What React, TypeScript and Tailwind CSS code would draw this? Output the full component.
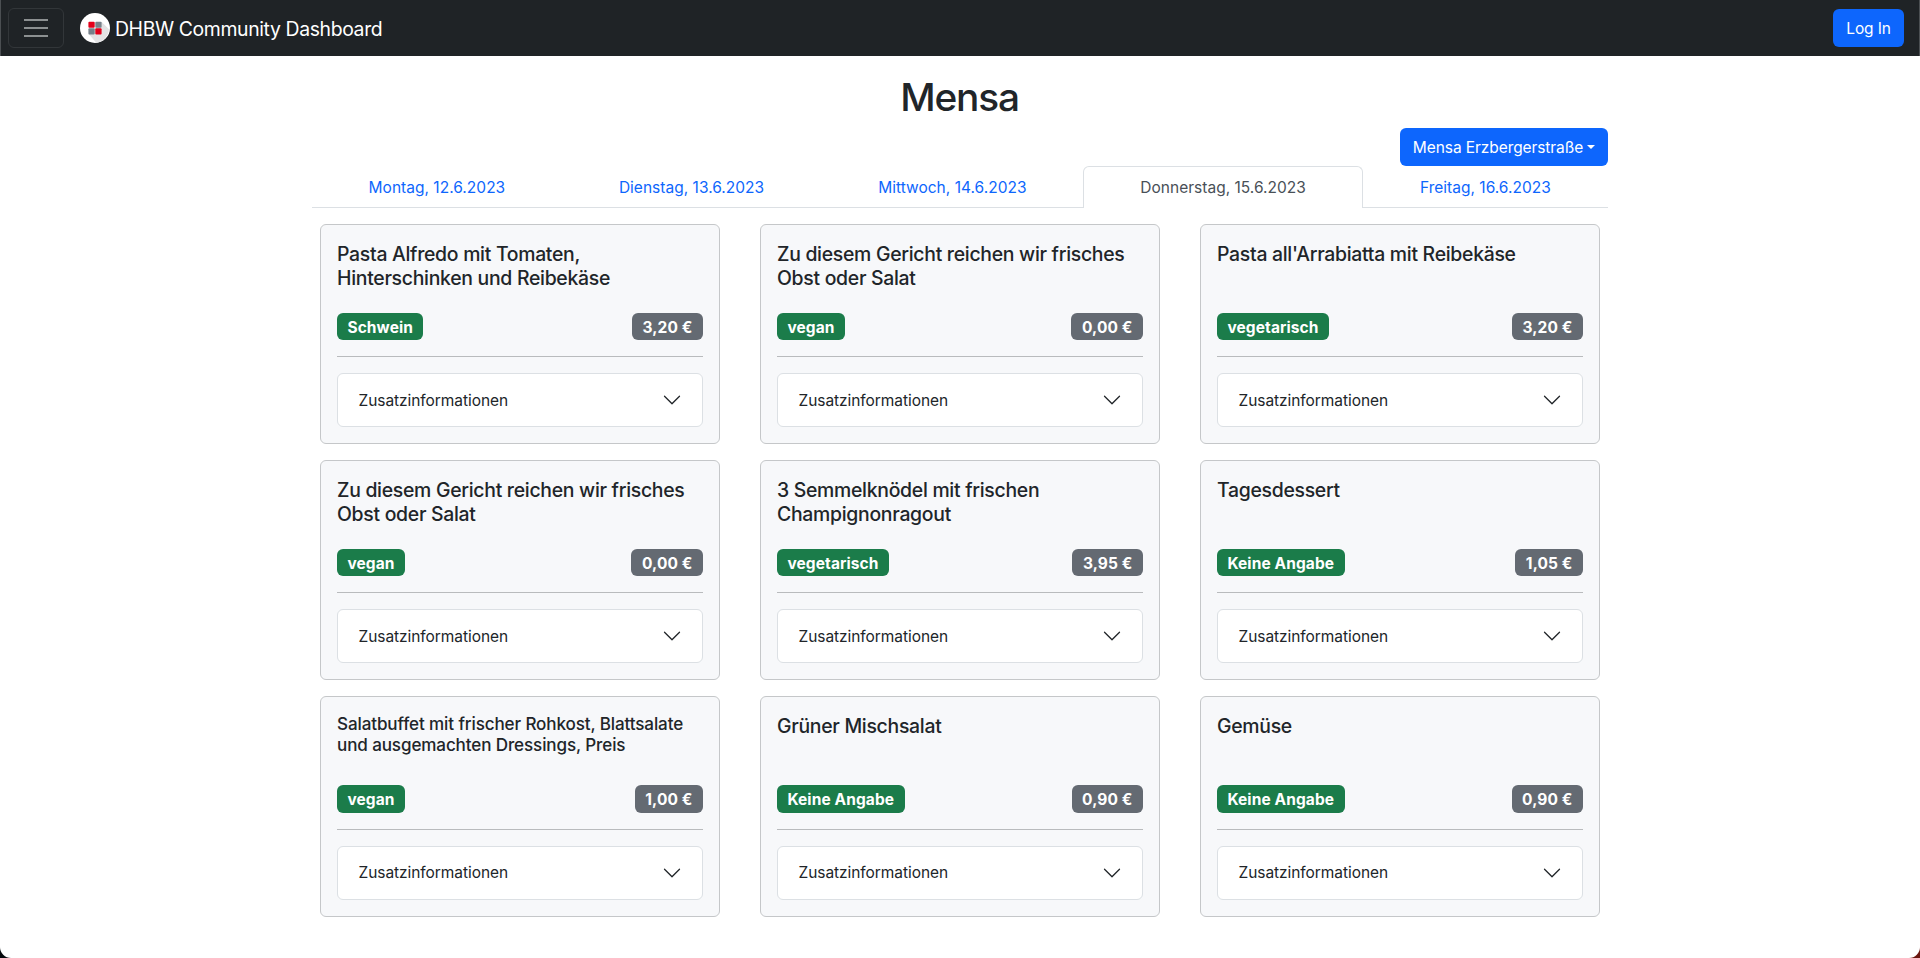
type Tab = { label: string; width: string; active?: boolean };
type Meal = { name: string; kind: string; price: string; small?: boolean };

const tabs: Tab[] = [
  { label: "Montag, 12.6.2023", width: "w-[249.8px]" },
  { label: "Dienstag, 13.6.2023", width: "w-[259.5px]" },
  { label: "Mittwoch, 14.6.2023", width: "w-[262.1px]" },
  { label: "Donnerstag, 15.6.2023", width: "w-[279.4px]", active: true },
  { label: "Freitag, 16.6.2023", width: "w-[245.2px]" },
];

const meals: Meal[] = [
  { name: "Pasta Alfredo mit Tomaten, Hinterschinken und Reibekäse", kind: "Schwein", price: "3,20 €" },
  { name: "Zu diesem Gericht reichen wir frisches Obst oder Salat", kind: "vegan", price: "0,00 €" },
  { name: "Pasta all'Arrabiatta mit Reibekäse", kind: "vegetarisch", price: "3,20 €" },
  { name: "Zu diesem Gericht reichen wir frisches Obst oder Salat", kind: "vegan", price: "0,00 €" },
  { name: "3 Semmelknödel mit frischen Champignonragout", kind: "vegetarisch", price: "3,95 €" },
  { name: "Tagesdessert", kind: "Keine Angabe", price: "1,05 €" },
  { name: "Salatbuffet mit frischer Rohkost, Blattsalate und ausgemachten Dressings, Preis", kind: "vegan", price: "1,00 €", small: true },
  { name: "Grüner Mischsalat", kind: "Keine Angabe", price: "0,90 €" },
  { name: "Gemüse", kind: "Keine Angabe", price: "0,90 €" },
];

function Logo() {
  return (
    <svg viewBox="0 0 30 30" className="size-[30px]">
      <circle cx="15" cy="15" r="15" fill="#fff" />
      <path d="M21.5 8.8 L29 16.3 A15 15 0 0 1 16.5 29.9 L8.6 21 Z" fill="#e3e3e4" />
      <rect x="8.4" y="8.7" width="6.3" height="6.1" rx="1" fill="#e2001a" />
      <rect x="15.3" y="8.7" width="6.3" height="6.1" rx="1" fill="#77818a" />
      <rect x="8.4" y="15.3" width="6.3" height="6.1" rx="1" fill="#77818a" />
      <rect x="15.3" y="15.3" width="6.3" height="6.1" rx="1" fill="#e2001a" />
    </svg>
  );
}

function Navbar() {
  return (
    <nav className="flex h-14 items-center justify-between border-x border-[#4b4f52] bg-[#1f2326] pr-[15px] pl-[7px]">
      <div className="flex items-center">
        <button className="flex h-10 w-14 items-center justify-center rounded-md border border-[#323639]">
          <svg viewBox="0 0 30 30" className="size-[30px]">
            <path d="M3 7h24M3 15h24M3 23h24" stroke="#8c9091" strokeWidth="2" fill="none" />
          </svg>
        </button>
        <a className="ml-4 flex items-center gap-[5px]">
          <Logo />
          <span className="pt-0.5 text-[19.4px] leading-[28px] tracking-[-0.37px] text-white">DHBW Community Dashboard</span>
        </a>
      </div>
      <button className="h-[38px] w-[71px] rounded-md bg-[#0d66fd] pt-0.5 text-[15.5px] tracking-[-0.14px] text-white">Log In</button>
    </nav>
  );
}

function MealCard({ meal }: { meal: Meal }) {
  return (
    <article className="h-[220.2px] rounded-md border border-[#c5c7c9] bg-[#f7f8fa] p-4">
      <h5
        className={
          meal.small
            ? "h-[72px] text-[17.07px] leading-[21.1px] font-medium tracking-[-0.12px]"
            : "h-[72px] pt-px text-[19.4px] leading-6 font-medium tracking-[-0.28px]"
        }
      >
        {meal.name}
      </h5>
      <div className="flex justify-between text-[15.5px] font-bold tracking-[0.1px] text-white">
        <span className="flex h-[27.2px] items-center rounded-md bg-[#1b7c4a] px-[10.4px] pt-[1.5px]">{meal.kind}</span>
        <span className="flex h-[27.2px] items-center rounded-md bg-[#646a72] px-[10.5px] pt-[1.5px]">{meal.price}</span>
      </div>
      <hr className="my-4 border-t border-[#b9bbbd]" />
      <button className="flex h-[54px] w-full items-center justify-between rounded-md border border-[#dce0e4] bg-white pr-5 pl-[20.5px] text-[15.5px] tracking-[-0.06px]">
        Zusatzinformationen
        <svg viewBox="0 0 16 16" className="size-5" fill="#212529">
          <path
            fillRule="evenodd"
            d="M1.646 4.646a.5.5 0 0 1 .708 0L8 10.293l5.646-5.647a.5.5 0 0 1 .708.708l-6 6a.5.5 0 0 1-.708 0l-6-6a.5.5 0 0 1 0-.708z"
          />
        </svg>
      </button>
    </article>
  );
}

export default function App() {
  return (
    <div className="h-[958px] overflow-hidden bg-linear-to-r from-[#05090d] from-50% to-[#6b1710] to-50% font-['Inter',sans-serif] text-[#212529]">
      <div className="h-full rounded-b-[11px] bg-white">
        <Navbar />
        <main className="mx-auto w-[1296px]">
          <h1 className="mt-[17px] h-[55px] pr-px text-center text-[38.8px] leading-[48px] font-medium tracking-[-1.2px]">Mensa</h1>
          <div className="flex justify-end">
            <button className="flex h-[38px] w-52 items-center justify-center gap-1 rounded-md bg-[#0d66fd] text-[15.5px] tracking-[-0.08px] text-white">
              <span className="pt-0.5">Mensa Erzbergerstraße</span>
              <span className="border-x-[4.5px] border-t-[4.5px] border-x-transparent border-t-white" />
            </button>
          </div>
          <div className="flex h-[42px] text-[15.5px] tracking-[0.02px]">
            {tabs.map((tab) => (
              <div
                key={tab.label}
                className={`${tab.width} flex shrink-0 items-center justify-center ${
                  tab.active
                    ? "rounded-t-md border border-b-0 border-[#dce0e4] text-[#495057]"
                    : "border-b border-[#dce0e4] pt-0.5 text-[#0d66fd]"
                }`}
              >
                {tab.label}
              </div>
            ))}
          </div>
          <section className="mt-4 grid grid-cols-[400px_400px_400px] gap-x-10 gap-y-4 px-2">
            {meals.map((meal, i) => (
              <MealCard key={i} meal={meal} />
            ))}
          </section>
        </main>
      </div>
    </div>
  );
}
